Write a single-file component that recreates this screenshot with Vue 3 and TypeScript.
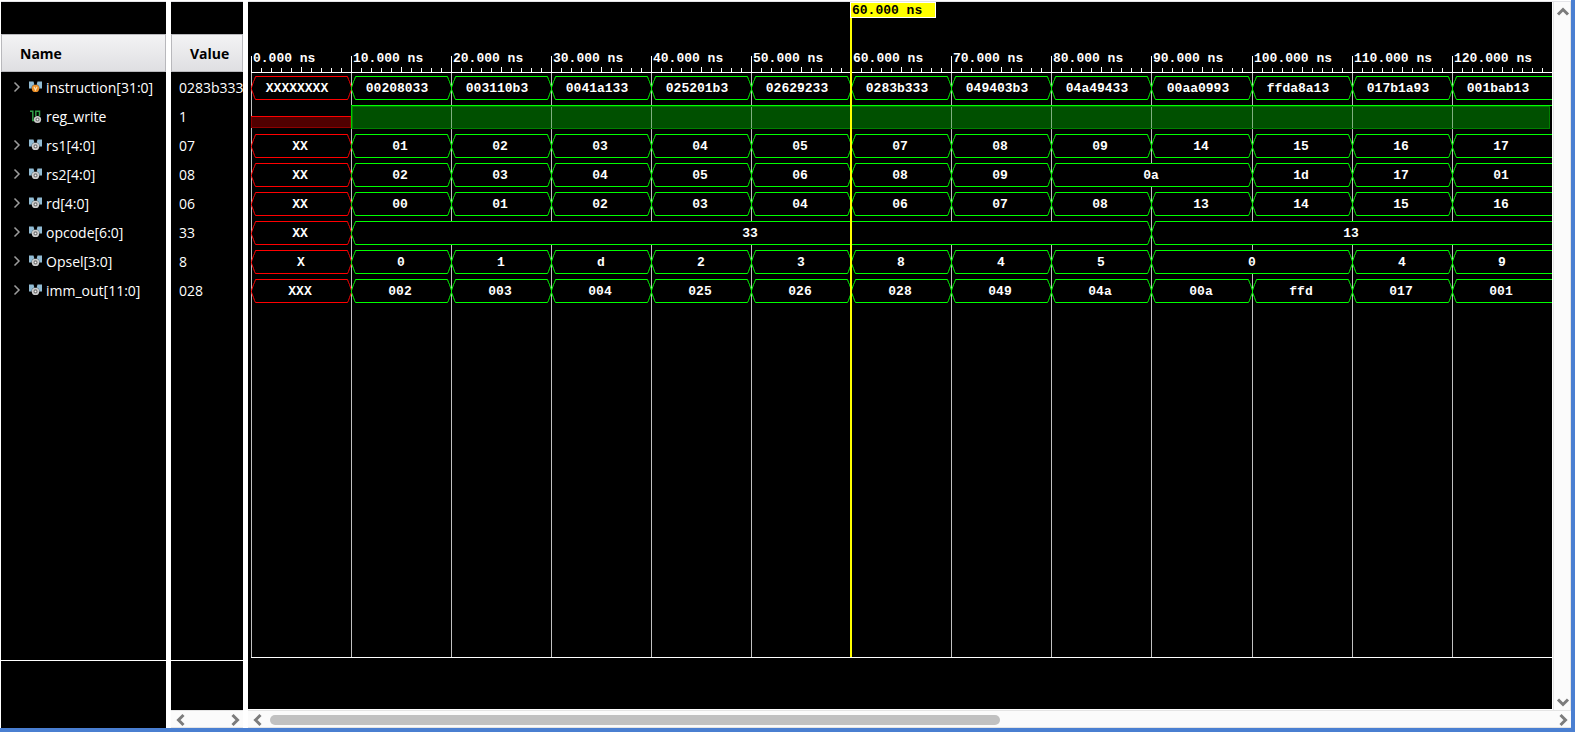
<script setup lang="ts">
interface Segment { from: number; to: number; label: string }
interface Signal { name: string; value: string; kind: 'vbus' | 'bus' | 'bit'; segments: Segment[] }

const ORIGIN = 3
const PX_PER_MARK = 100.055
const ROW = 29
const TOP = 74
const LAST = 13

// Consecutive equal values merge into one wide segment.
const split = (labels: string): Segment[] => {
  const out: Segment[] = []
  labels.split(' ').forEach((label, i) => {
    const last = out[out.length - 1]
    if (last && last.label === label) last.to = i + 1
    else out.push({ from: i, to: i + 1, label })
  })
  return out
}

const signals: Signal[] = [
  { name: 'instruction[31:0]', value: '0283b333', kind: 'vbus', segments: split('XXXXXXXX 00208033 003110b3 0041a133 025201b3 02629233 0283b333 049403b3 04a49433 00aa0993 ffda8a13 017b1a93 001bab13') },
  { name: 'reg_write', value: '1', kind: 'bit', segments: [] },
  { name: 'rs1[4:0]', value: '07', kind: 'bus', segments: split('XX 01 02 03 04 05 07 08 09 14 15 16 17') },
  { name: 'rs2[4:0]', value: '08', kind: 'bus', segments: split('XX 02 03 04 05 06 08 09 0a 0a 1d 17 01') },
  { name: 'rd[4:0]', value: '06', kind: 'bus', segments: split('XX 00 01 02 03 04 06 07 08 13 14 15 16') },
  { name: 'opcode[6:0]', value: '33', kind: 'bus', segments: split('XX 33 33 33 33 33 33 33 33 13 13 13 13') },
  { name: 'Opsel[3:0]', value: '8', kind: 'bus', segments: split('X 0 1 d 2 3 8 4 5 0 0 4 9') },
  { name: 'imm_out[11:0]', value: '028', kind: 'bus', segments: split('XXX 002 003 004 025 026 028 049 04a 00a ffd 017 001') },
]

const rowTop = (row: number) => TOP + row * ROW
const xAt = (t: number) => ORIGIN + Math.round(t * PX_PER_MARK)

const marks = Array.from({ length: LAST }, (_, i) => ({ x: xAt(i), label: `${i * 10}.000 ns` }))
const ticks = Array.from({ length: LAST * 10 }, (_, i) => i).filter((i) => i % 10 !== 0)

const outline = (s: Segment, row: number): string => {
  const a = xAt(s.from)
  const b = xAt(s.to)
  const y = rowTop(row)
  const left = `M${a + 4} ${y}L${a + 3} ${y + 3}L${a + 2} ${y + 5}L${a} ${y + 11}V${y + 13}L${a + 2} ${y + 18}L${a + 3} ${y + 21}L${a + 4} ${y + 23}`
  if (s.to === LAST) return `${left}H${b + 6}M${a + 4} ${y}H${b + 6}`
  return `${left}H${b - 4}L${b - 3} ${y + 21}L${b - 2} ${y + 18}L${b} ${y + 13}V${y + 11}L${b - 2} ${y + 5}L${b - 3} ${y + 3}L${b - 4} ${y}Z`
}
const labelX = (s: Segment) => Math.round((xAt(s.from) + xAt(s.to)) / 2) - Math.floor(s.label.length / 2)
</script>

<template>
  <main class="viewer">
    <section class="pane names">
      <div class="blank"></div>
      <h2 class="head">Name</h2>
      <ul class="list">
        <li v-for="s in signals" :key="s.name" class="signal">
          <button v-if="s.kind !== 'bit'" class="expand" type="button" :aria-label="`Expand ${s.name}`">
            <svg width="8" height="12" viewBox="0 0 8 12"><path d="M1.5 1.5L6 6L1.5 10.5" fill="none" stroke="#9c9c9c" stroke-width="1.5" /></svg>
          </button>
          <span v-else class="expand"></span>
          <svg v-if="s.kind === 'bit'" class="icon" width="13" height="14" viewBox="0 0 13 14">
            <path d="M1 1.2H3.8V10.5H6M6.8 6V1.2H10.5V6" fill="none" stroke="#2f9a46" stroke-width="1.5" />
            <circle cx="8.5" cy="9.5" r="3.6" fill="#cfcfcf" />
            <circle cx="8.5" cy="9.5" r="1.5" fill="#f4f4f4" stroke="#747474" stroke-width="1.1" />
          </svg>
          <svg v-else class="icon" width="13" height="14" viewBox="0 0 13 14">
            <path d="M0 .5H4.5L5.5 4L4 9L2.5 7.5H0Z" fill="#91bbd3" />
            <path d="M13 .5H8.5L7.5 4L9 9L10.5 7.5H13Z" fill="#91bbd3" />
            <circle cx="6.5" cy="7.4" r="4.2" fill="#101416" opacity="0.55" />
            <circle cx="6.5" cy="7.4" r="3.7" :fill="s.kind === 'vbus' ? '#ee9128' : '#cecece'" />
            <path v-if="s.kind === 'vbus'" d="M5 5.8L6.5 8.9L8 5.8" fill="none" stroke="#ffe3b9" stroke-width="1.1" />
            <circle v-else cx="6.5" cy="7.4" r="1.5" fill="#f4f4f4" stroke="#707070" stroke-width="1.1" />
          </svg>
          <span class="text">{{ s.name }}</span>
        </li>
      </ul>
      <div class="foot"></div>
    </section>

    <section class="pane values">
      <div class="blank"></div>
      <h2 class="head">Value</h2>
      <ul class="list">
        <li v-for="s in signals" :key="s.name" class="signal">{{ s.value }}</li>
      </ul>
      <div class="foot short"></div>
      <div class="hbar">
        <button type="button" class="arrow" aria-label="Scroll values left"><svg width="10" height="14" viewBox="0 0 10 14"><path d="M7.5 2L2.5 7L7.5 12" /></svg></button>
        <button type="button" class="arrow" aria-label="Scroll values right"><svg width="10" height="14" viewBox="0 0 10 14"><path d="M2.5 2L7.5 7L2.5 12" /></svg></button>
      </div>
    </section>

    <section class="waves">
      <div class="upper">
        <div class="scope">
          <div class="plot">
            <svg class="canvas" width="100%" height="100%" role="img" aria-label="Signal waveforms">
              <g shape-rendering="crispEdges">
                <rect v-for="m in marks" :key="m.x" :x="m.x" y="70" width="1" height="100%" fill="#c0c0c0" />
                <rect v-for="m in marks" :key="m.label" :x="m.x" y="54" width="1" height="17" fill="#fff" />
                <rect :x="ORIGIN" y="70" width="100%" height="1" fill="#fff" />
                <rect v-for="t in ticks" :key="t" :x="xAt(t / 10)" :y="t % 5 ? 66 : 65" width="1" height="5" fill="#fff" />
              </g>
              <g class="mono" fill="#fff">
                <text v-for="m in marks" :key="m.x" :x="m.x + 2" y="60">{{ m.label }}</text>
              </g>
              <template v-for="(s, row) in signals" :key="s.name">
                <g v-if="s.kind === 'bit'" shape-rendering="crispEdges">
                  <rect :x="ORIGIN" :y="rowTop(row) + 11" width="100" height="12" fill="#500000" />
                  <path :d="`M${ORIGIN + 0.5} ${rowTop(row) + 11}V${rowTop(row) + 22.5}H${ORIGIN + 99.5}V${rowTop(row) + 11}`" fill="none" stroke="#900000" />
                  <rect :x="ORIGIN" :y="rowTop(row) + 11" width="100" height="1" fill="#f00" />
                  <rect :x="xAt(1)" :y="rowTop(row)" width="1199" height="24" fill="#005000" />
                  <rect v-for="m in marks.slice(2)" :key="m.x" :x="m.x" :y="rowTop(row)" width="1" height="24" fill="#80b080" />
                  <rect :x="xAt(1) + 0.5" :y="rowTop(row) + 1.5" width="1198" height="22" fill="none" stroke="#008000" />
                  <rect :x="xAt(1) + 1" :y="rowTop(row) + 1" width="1" height="22" fill="#008000" />
                  <rect :x="xAt(1)" :y="rowTop(row)" width="1201" height="1" fill="#0f0" />
                  <rect :x="xAt(1)" :y="rowTop(row)" width="1" height="24" fill="#0c0" />
                </g>
                <g v-else>
                  <rect v-for="g in s.segments" :key="g.from" :x="xAt(g.from) + 4" :y="rowTop(row)" :width="xAt(g.to) - xAt(g.from) - 8" height="24" fill="#000" />
                  <path v-for="g in s.segments" :key="g.from" :d="outline(g, row)" transform="translate(0.5 0.5)" fill="none" :stroke="g.from ? '#0f0' : '#f00'" />
                  <text v-for="g in s.segments" :key="g.from" class="mono" :x="labelX(g)" :y="rowTop(row) + 16" text-anchor="middle" fill="#fff">{{ g.label }}</text>
                </g>
              </template>
              <rect :x="xAt(6) - 1" y="0" width="2" height="100%" fill="#ff0" />
              <rect :x="xAt(6) - 0.5" y="0.5" width="85" height="15" fill="#ff0" stroke="#fff" />
              <text class="mono" :x="xAt(6) + 1" y="12" fill="#000">60.000 ns</text>
            </svg>
          </div>
          <div class="under"></div>
        </div>
        <div class="vbar">
          <button type="button" class="arrow" aria-label="Scroll up"><svg width="14" height="10" viewBox="0 0 14 10"><path d="M2 7.5L7 2.5L12 7.5" /></svg></button>
          <button type="button" class="arrow" aria-label="Scroll down"><svg width="14" height="10" viewBox="0 0 14 10"><path d="M2 2.5L7 7.5L12 2.5" /></svg></button>
        </div>
      </div>
      <div class="hbar">
        <button type="button" class="arrow" aria-label="Scroll waves left"><svg width="10" height="14" viewBox="0 0 10 14"><path d="M7.5 2L2.5 7L7.5 12" /></svg></button>
        <div class="track"><div class="thumb"></div></div>
        <button type="button" class="arrow" aria-label="Scroll waves right"><svg width="10" height="14" viewBox="0 0 10 14"><path d="M2.5 2L7.5 7L2.5 12" /></svg></button>
      </div>
    </section>
  </main>
</template>

<style>
body { margin: 0; background: #fff; overflow: hidden; }
</style>

<style scoped>
.viewer {
  display: flex;
  gap: 5px;
  box-sizing: border-box;
  height: calc(100vh - 4px);
  margin-right: 4px;
  padding: 1px 0 0 1px;
  border-right: 4px solid #4a7fd1;
  border-bottom: 4px solid #4a7fd1;
  background: #fff;
  font: 14px/29px "Open Sans", "Noto Sans", sans-serif;
}
.pane {
  display: flex;
  flex-direction: column;
  flex: none;
  border-top: 1px solid #e4e4e8;
  color: #fff;
}
.names { width: 165px; }
.values { width: 72px; }
.blank { height: 32px; background: #000; }
.head {
  box-sizing: border-box;
  height: 38px;
  margin: 0;
  border: 1px solid #b8b8bc;
  background: linear-gradient(#f3f3f4, #dfdfe2);
  color: #000;
  font-size: 14px;
  font-weight: 700;
  line-height: 37px;
  padding-left: 18px;
}
.list {
  flex: 1;
  margin: 0;
  padding: 1px 0 0;
  list-style: none;
  background: #000;
  border-bottom: 1px solid #fff;
  overflow: hidden;
}
.signal { display: flex; align-items: center; height: 29px; white-space: nowrap; }
.values .signal { padding-left: 8px; }
.expand {
  display: flex;
  width: 16px;
  height: 16px;
  margin-left: 12px;
  padding: 1px 0 0;
  border: 0;
  background: none;
  box-sizing: border-box;
}
.icon { flex: none; }
.text { margin-left: 4px; }
.foot { height: 67px; background: #000; }
.foot.short { height: 49px; }
.waves { display: flex; flex-direction: column; flex: 1; min-width: 0; border-top: 1px solid #e4e4e8; }
.upper { display: flex; flex: 1; min-height: 0; }
.scope { display: flex; flex-direction: column; flex: 1; min-width: 0; background: #000; margin-bottom: 1px; }
.plot { flex: 1; min-height: 0; overflow: hidden; }
.canvas { display: block; }
.under { height: 51px; margin-left: 3px; border-top: 1px solid #fff; }
.mono { font: bold 13px "Liberation Mono", monospace; }
.vbar {
  display: flex;
  flex-direction: column;
  justify-content: space-between;
  align-items: center;
  box-sizing: border-box;
  width: 18px;
  margin-left: 1px;
  padding: 5px 0 3px 2px;
  border-left: 1px solid #e4e4e4;
  border-right: 1px solid #e4e4e4;
  background: #fbfbfb;
}
.hbar {
  display: flex;
  justify-content: space-between;
  align-items: center;
  box-sizing: border-box;
  height: 18px;
  padding: 1px 3px 0 5px;
  border-top: 1px solid #e4e4e4;
  border-bottom: 1px solid #e4e4e4;
  background: #fbfbfb;
}
.arrow { display: flex; padding: 0; border: 0; background: none; }
.arrow path { fill: none; stroke: #7c7c7c; stroke-width: 3; }
.track { flex: 1; margin: 0 7px; }
.thumb { width: 57%; height: 10px; border-radius: 5px; background: #c1c1c1; }
</style>
